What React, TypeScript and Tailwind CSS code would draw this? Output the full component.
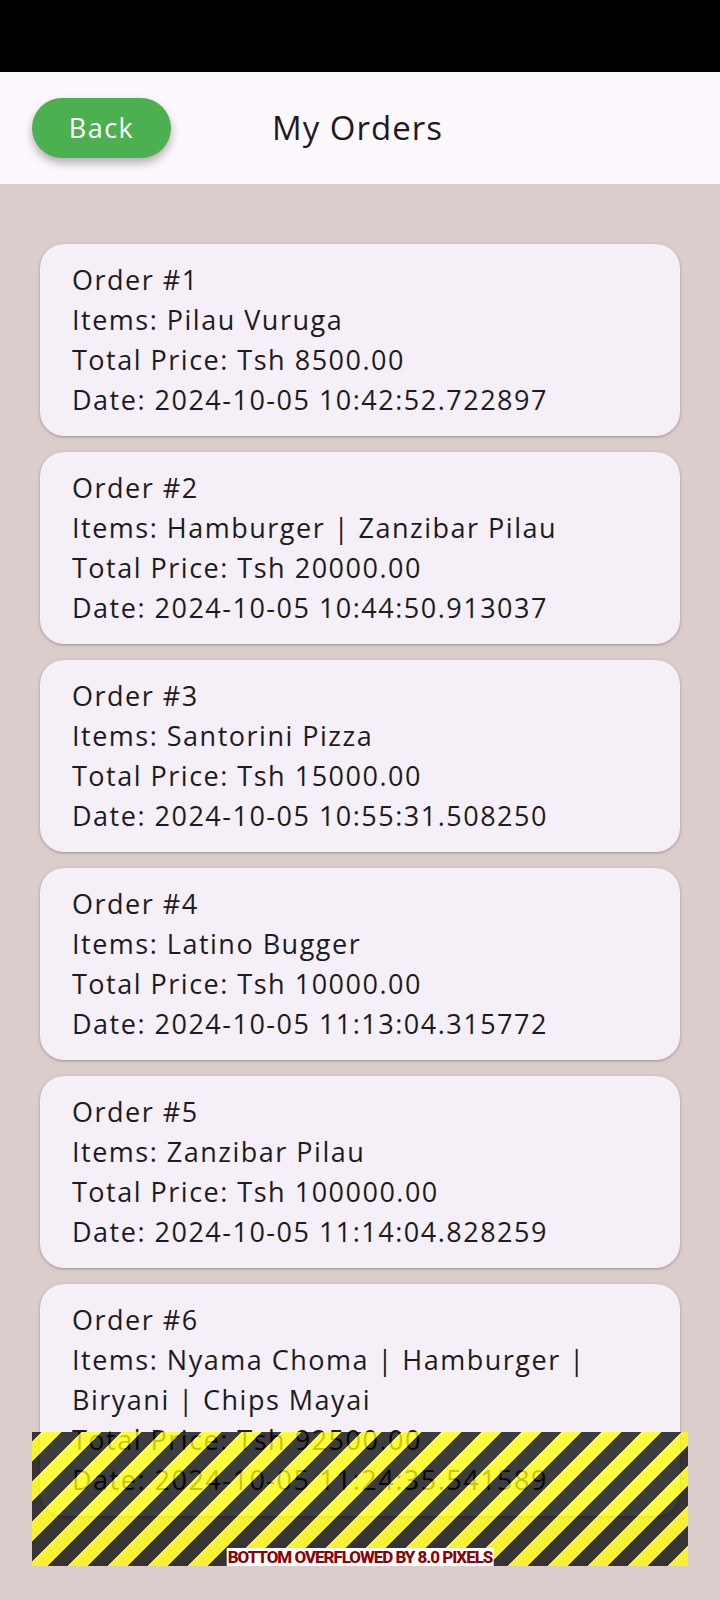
import React from 'react';

interface Order {
  id: number;
  items: string[];
  total: string;
  date: string;
}

const orders: Order[] = [
  { id: 1, items: ['Items: Pilau Vuruga'], total: '8500.00', date: '2024-10-05 10:42:52.722897' },
  { id: 2, items: ['Items: Hamburger | Zanzibar Pilau'], total: '20000.00', date: '2024-10-05 10:44:50.913037' },
  { id: 3, items: ['Items: Santorini Pizza'], total: '15000.00', date: '2024-10-05 10:55:31.508250' },
  { id: 4, items: ['Items: Latino Bugger'], total: '10000.00', date: '2024-10-05 11:13:04.315772' },
  { id: 5, items: ['Items: Zanzibar Pilau'], total: '100000.00', date: '2024-10-05 11:14:04.828259' },
  {
    id: 6,
    items: ['Items: Nyama Choma | Hamburger |', 'Biryani | Chips Mayai'],
    total: '92500.00',
    date: '2024-10-05 11:24:35.541589'
  }
];

const OrderCard = ({ order }: { order: Order }) => (
  <div className="w-[640px] shrink-0 rounded-[24px] bg-[#f5f0f7] px-8 py-4 shadow-[0_1px_3px_rgba(0,0,0,0.3)]">
    <div className="text-[27px] leading-[40px] tracking-[1.5px] text-[#1d1b20]">
      <div>Order #{order.id}</div>
      {order.items.map((line) => (
        <div key={line}>{line}</div>
      ))}
      <div>Total Price: Tsh {order.total}</div>
      <div>Date: {order.date}</div>
    </div>
  </div>
);

const App = () => {
  return (
    <div className="flex h-[1600px] w-[720px] flex-col overflow-hidden bg-[#dbcdcc] font-['Open_Sans',sans-serif]">
      {/* status bar */}
      <div className="h-[72px] shrink-0 bg-black" />

      {/* app bar */}
      <div className="flex h-[112px] shrink-0 items-center bg-[#fdf7fe] pl-8">
        <button className="flex h-[60px] w-[139px] items-center justify-center rounded-full bg-[#4caf50] text-[27px] tracking-[1.5px] text-white shadow-[0_5px_10px_rgba(0,0,0,0.3)]">
          Back
        </button>
        <h1 className="ml-[101px] text-[33px] tracking-[1px] text-[#1d1b20]">My Orders</h1>
      </div>

      {/* orders */}
      <div className="relative flex-1">
        <div className="flex flex-col items-center gap-4 pt-[60px]">
          {orders.map((order) => (
            <OrderCard key={order.id} order={order} />
          ))}
        </div>

        {/* flutter overflow indicator */}
        <div className="absolute bottom-[34px] left-8 right-8 h-[134px] bg-[repeating-linear-gradient(135deg,rgba(0,0,0,0.75)_0px,rgba(0,0,0,0.75)_7.07px,rgba(255,255,0,0.75)_7.07px,rgba(255,255,0,0.75)_21.21px,rgba(0,0,0,0.75)_21.21px,rgba(0,0,0,0.75)_28.28px)]">
          <div className="absolute bottom-0 left-1/2 -translate-x-1/2 bg-white px-px font-['Roboto',sans-serif] text-[17px] font-extrabold leading-[18px] tracking-[-1.05px] text-[#900000]">
            BOTTOM OVERFLOWED BY 8.0 PIXELS
          </div>
        </div>
      </div>
    </div>
  );
};

export default App;
